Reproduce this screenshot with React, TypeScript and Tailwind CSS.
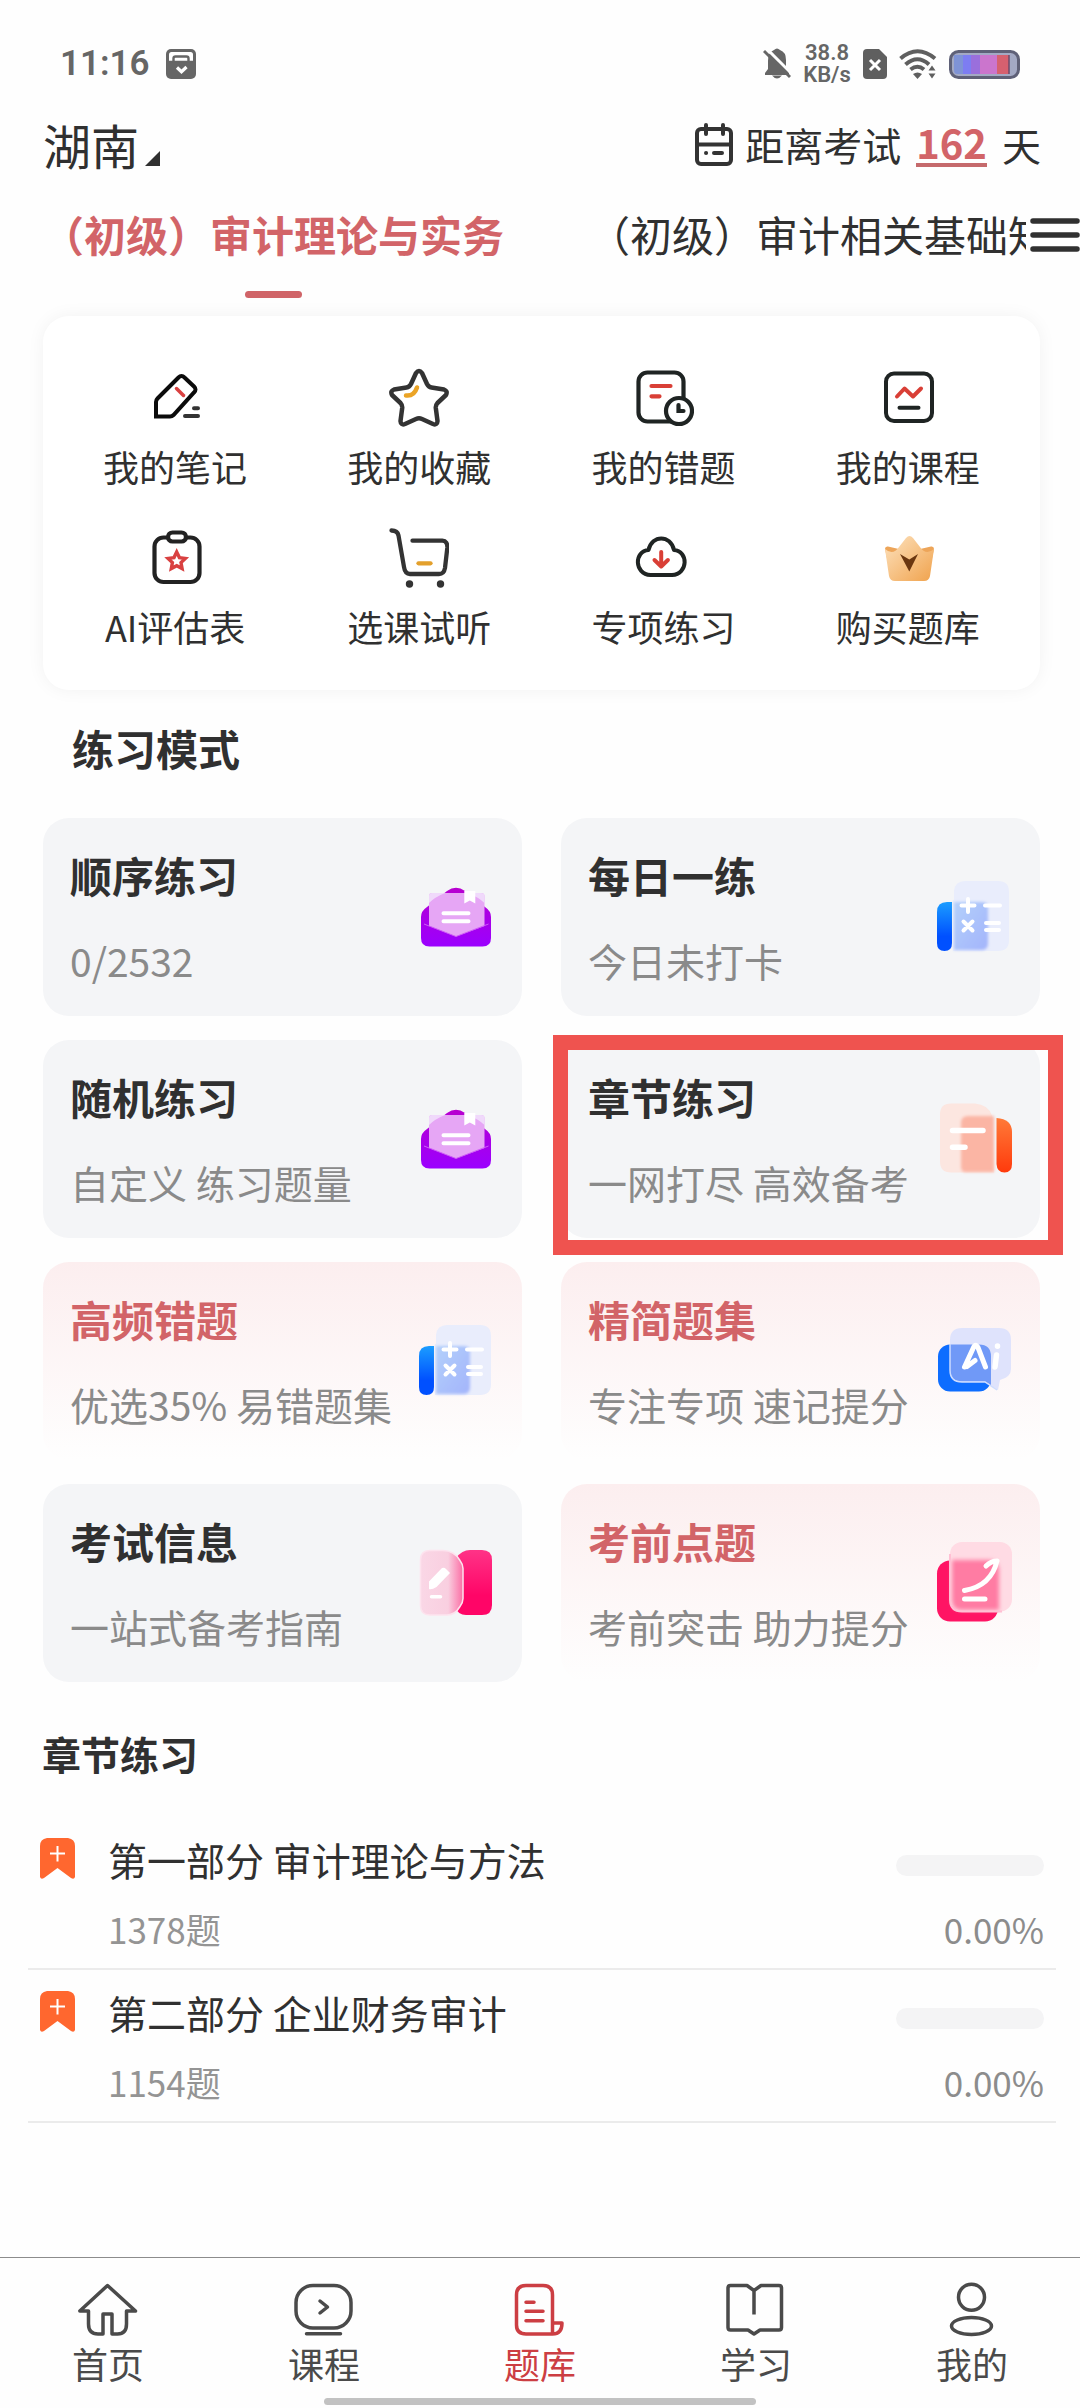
import React, { useState } from 'react';
import clsx from 'clsx';

const PlannerIcon = () => (
    <svg viewBox="0 0 30 30" className="w-[30px] h-[30px]" aria-hidden="true">
        <rect width="30" height="30" rx="5" fill="#666" />
        <path d="M3 12V5.500Q3 3 5.500 3h19Q27 3 27 5.500V12" fill="#fff" />
        <path d="M7.500 13V9.500Q7.500 7.500 9.500 7.500h11q2 0 2 2V13" fill="none" stroke="#666" strokeWidth="2.400" />
        <path d="M3 12.500h24" stroke="#666" strokeWidth="1.500" />
        <path d="M11 18.500l4.500 4.200 5-4.700" fill="none" stroke="#fff" strokeWidth="3.200" />
    </svg>
);

const BellOffIcon = () => (
    <svg viewBox="0 0 28 32" className="w-7 h-8" aria-hidden="true">
        <path d="M5 13Q5 4 11 2q3-3 6 0 6 2 6 10v8l3 5v2H2v-2l3-4z" fill="#666" />
        <path d="M9 27.500q5 6 10 0z" fill="#666" />
        <path d="M3 0l27 27" stroke="#fefefe" strokeWidth="3" />
        <path d="M1 3l26 26" stroke="#666" strokeWidth="3" />
    </svg>
);

const SimIcon = () => (
    <svg viewBox="0 0 24 30" className="w-6 h-[30px]" aria-hidden="true">
        <path d="M4 0h12l8 8v18q0 4-4 4H4q-4 0-4-4V4Q0 0 4 0z" fill="#5f5f5f" />
        <path d="M7 11l10 10M17 11L7 21" stroke="#fff" strokeWidth="3" />
    </svg>
);

const WifiIcon = () => (
    <svg viewBox="0 0 38 30" className="w-[38px] h-[30px]" fill="none" stroke="#5f5f5f" strokeWidth="4" aria-hidden="true">
        <path d="M1.500 9.500Q18.500-5 36 9.500" />
        <path d="M6.500 15.500Q18.500 5 30 15.500" />
        <path d="M11.500 20.500Q18.500 15 25 20.500" />
        <path d="M14 25q4.500-3 9 0l-4.500 5z" fill="#5f5f5f" stroke="none" />
        <path d="M29.500 21.500l3.500-5 3.500 5zM29.500 24.500l3.500 5 3.500-5z" fill="#5f5f5f" stroke="none" />
    </svg>
);

const BatteryIcon = () => (
    <svg viewBox="0 0 71 29" className="w-[71px] h-[29px]" aria-hidden="true">
        <rect x="1.500" y="1.500" width="68" height="26" rx="8" fill="#a3a9c4" stroke="#5f6178" strokeWidth="3" />
        <path d="M5 5h9v19H8q-3 0-3-4z" fill="#7f93d6" />
        <path d="M14 5h8v19h-8z" fill="#7d7df2" />
        <path d="M22 5h9v19h-9z" fill="#9a6fdc" />
        <path d="M31 5h17v19H31z" fill="#cb75cd" />
        <path d="M48 5h12v19H48z" fill="#d6606f" />
        <path d="M60 5v19" stroke="#6d4a6a" strokeWidth="1.500" />
    </svg>
);

const CalendarIcon = () => (
    <svg viewBox="0 0 38 43" className="w-[38px] h-[43px]" fill="none" stroke="#333" strokeWidth="4" strokeLinecap="round" aria-hidden="true">
        <rect x="2" y="6" width="34" height="35" rx="4" />
        <path d="M2 21.500h34M11 2v9M28 2v9M19 30h8M11 30h.1" />
    </svg>
);

const NoteIcon = () => (
    <svg viewBox="0 0 60 60" className="w-[60px] h-[60px]" fill="none" strokeWidth="4" strokeLinecap="round" aria-hidden="true">
        <path d="M11 48.500V34q0-2 1.500-3.500L33.500 9.500q3-3 6 0l9.500 9q3 3 0 6L28.500 47q-1.500 1.500-3.500 1.500z" stroke="#0b0b0b" />
        <path d="M40 48h13M49 40.300h4" stroke="#333" />
        <path d="M31.500 20.500l7 7" stroke="#d94141" strokeWidth="3.500" />
    </svg>
);

const StarIcon = () => (
    <svg viewBox="0 0 60 60" className="w-[60px] h-[60px]" fill="none" strokeWidth="4.500" strokeLinecap="round" strokeLinejoin="round" aria-hidden="true">
        <path
            d="M27 5q3-4 6 0l5 11q1.500 3 4.500 3.500l12.500 2q4 1.500 2 5.500l-8.500 8q-2 2.200-1.700 5l1.700 13q-.3 4.500-4.500 3l-11-5q-3-1.400-6 0l-11 5q-4.200 1.500-4.500-3l1.700-13q.3-2.800-1.700-5l-8.500-8q-2-4 2-5.500l12.500-2q3-.5 4.500-3.500z"
            stroke="#333"
        />
        <path d="M17 27.500q8 1 11-8" stroke="#eba426" />
    </svg>
);

const WrongIcon = () => (
    <svg viewBox="0 0 60 60" className="w-[60px] h-[60px]" fill="none" strokeWidth="4.200" strokeLinecap="round" aria-hidden="true">
        <rect x="4.500" y="4.500" width="45" height="49" rx="9" stroke="#1f2423" />
        <path d="M17.500 18h19M17.500 28.300h8" stroke="#d93f36" />
        <circle cx="45" cy="43" r="13" fill="#fff" stroke="#1f2423" />
        <path d="M44.500 37v6h5" stroke="#1f2423" />
    </svg>
);

const CourseBoxIcon = () => (
    <svg viewBox="0 0 60 60" className="w-[60px] h-[60px]" fill="none" strokeWidth="4" strokeLinecap="round" strokeLinejoin="round" aria-hidden="true">
        <rect x="8" y="5.500" width="46" height="47.500" rx="8" stroke="#1f2423" />
        <path d="M19 28.500l7.500-8 8.500 8 8-8" stroke="#d93f36" />
        <path d="M21.500 39.700h19" stroke="#1f2423" />
    </svg>
);

const ReportIcon = () => (
    <svg viewBox="0 0 60 60" className="w-[60px] h-[60px]" fill="none" strokeWidth="4.200" aria-hidden="true">
        <rect x="9.500" y="9.500" width="45" height="44.500" rx="9" stroke="#222" />
        <rect x="23" y="4.500" width="18" height="9" rx="4.500" fill="#fff" stroke="#222" />
        <path d="M31.700 24l2.700 5.600 6 .8-4.400 4.200 1.100 6-5.400-2.900-5.400 2.900 1.100-6-4.400-4.200 6-.8z" stroke="#d94141" strokeWidth="3.400" />
    </svg>
);

const CartIcon = () => (
    <svg viewBox="0 0 60 60" className="w-[60px] h-[60px]" fill="none" strokeWidth="4.300" strokeLinecap="round" strokeLinejoin="round" aria-hidden="true">
        <path d="M2.500 2.500q6 0 7 5L15 39q1 7 6 7h29q5 0 6-6l2.300-20q.5-7-5-7.300H23.500" stroke="#333" />
        <circle cx="20.500" cy="56" r="3.700" fill="#333" />
        <circle cx="51.500" cy="56" r="3.700" fill="#333" />
        <path d="M29.500 35.300h12" stroke="#e3a02c" />
    </svg>
);

const CloudIcon = () => (
    <svg viewBox="0 0 60 60" className="w-[60px] h-[60px]" fill="none" strokeWidth="4" strokeLinecap="round" strokeLinejoin="round" aria-hidden="true">
        <path d="M16.500 47C0 46 0 23 14.500 22 18 6.500 36.500 6.500 40 22 54.500 23 54.500 46 38 47z" stroke="#1f2423" />
        <path d="M27.200 24v14M20.500 32l6.700 6.500 6.700-6.500" stroke="#d93f36" />
    </svg>
);

const CrownIcon = () => (
    <svg viewBox="0 0 60 60" className="w-[60px] h-[60px]" aria-hidden="true">
        <defs>
            <linearGradient id="crown" x1="0" y1="0" x2="1" y2="1">
                <stop offset="0" stopColor="#fde3c0" />
                <stop offset="1" stopColor="#f0a24c" />
            </linearGradient>
        </defs>
        <path d="M7 21q0-3 3-2.500l13 3h17l13-3q3-.5 3 2.500l-3 14H10z" fill="#eda559" />
        <path d="M7 21q8 7 14-2l7-9q3.500-4 7 0l7 9q6 9 14 2l-4 27q-1 5-6 5H17q-5 0-6-5z" fill="url(#crown)" />
        <path d="M22 26l9.300 5.500L40 26l-8.700 17.500z" fill="#6b3710" />
    </svg>
);

const EnvelopeIcon = () => (
    <svg viewBox="0 0 80 80" className="w-20 h-20 shrink-0" aria-hidden="true">
        <defs>
            <linearGradient id="envelope" x1="0" y1="0" x2="0" y2="1">
                <stop offset="0" stopColor="#b800cf" />
                <stop offset="1" stopColor="#9b00ff" />
            </linearGradient>
        </defs>
        <path d="M12 31L32 15q9-6.500 18 0l20 16q6 4 6 10v21q0 8.500-8.500 8.500h-53Q6 70.500 6 62V41q0-6 6-10z" fill="url(#envelope)" />
        <path d="M14 20q0-3 3-3h49q3.500 0 3.500 3v30L41 60.500 14 50z" fill="#e6a6f5" />
        <path d="M14 20q0-3 3-3h13Q20 21 14 27zM69.500 20q0-3-3.500-3H53q10 4 16.500 10z" fill="#f0d9fb" />
        <path d="M9 48l32 12.500L73.500 48" fill="none" stroke="#cf5cf7" />
        <path d="M49.300 15h11v12.500l-5.500-3-5.500 3z" fill="#fff" />
        <path d="M28.500 37.300h25M28.500 45.300h25" stroke="#fff" strokeWidth="4" strokeLinecap="round" />
    </svg>
);

const MathIcon = () => (
    <svg viewBox="0 0 80 80" className="w-20 h-20 shrink-0" aria-hidden="true">
        <defs>
            <linearGradient id="mathSpine" x1="0" y1="0" x2="0" y2="1">
                <stop offset="0" stopColor="#1b9dff" />
                <stop offset=".7" stopColor="#0050ff" />
            </linearGradient>
            <linearGradient id="mathPage" x1="0" y1="0" x2="1" y2="1">
                <stop offset="0" stopColor="#b3d0fb" />
                <stop offset="1" stopColor="#a3b4fb" />
            </linearGradient>
            <filter id="mathSoft">
                <feGaussianBlur stdDeviation="1.500" />
            </filter>
        </defs>
        <path d="M19 26v41q0 8-7.500 8T4 67V36q0-10 10-10z" fill="url(#mathSpine)" />
        <path d="M20 24h1V15Q22 5 32 5h33q11 0 11 11v48q0 11-11 11H20z" fill="#e9edfc" />
        <path d="M21 26h28q6 0 6 6v35q0 7-6 7H21z" fill="url(#mathPage)" filter="url(#mathSoft)" />
        <path d="M28.500 29.500h13M35 23v13M52 29.500h15M30.500 45.500l9 9M39.500 45.500l-9 9M53 47h13M53 54h13" stroke="#fff" strokeWidth="4" strokeLinecap="round" />
    </svg>
);

const ChapterIcon = () => (
    <svg viewBox="0 0 80 80" className="w-20 h-20 shrink-0" aria-hidden="true">
        <defs>
            <linearGradient id="chapter" x1="0" y1="0" x2="0" y2="1">
                <stop offset="0" stopColor="#ff7a38" />
                <stop offset="1" stopColor="#ff3a0c" />
            </linearGradient>
            <filter id="chapterSoft">
                <feGaussianBlur stdDeviation="1.500" />
            </filter>
        </defs>
        <path d="M18 5.500h24q13 1 17 12l2 57H18q-11 0-11-11v-47q0-11 11-11z" fill="#fce6e0" />
        <path d="M35 18h26v56H33q-5 0-5-5V25q0-7 7-7z" fill="#fbb5a4" filter="url(#chapterSoft)" />
        <path d="M63.500 20q15.500 1 15.500 14v32q0 8.500-7.500 8.500t-8-8.500z" fill="url(#chapter)" />
        <path d="M19.500 32.500H50M19.500 49.300H32" stroke="#fff" strokeWidth="5.500" strokeLinecap="round" />
    </svg>
);

const AiIcon = () => (
    <svg viewBox="0 0 80 80" className="w-20 h-20 shrink-0" aria-hidden="true">
        <rect x="5" y="24.500" width="53" height="47" rx="12" fill="#0d6dff" />
        <path d="M29 8h37q12 0 12 12v29q0 8-11 11l-2 10-13-8H29q-12 0-12-12V20Q17 8 29 8z" fill="#dfe3fc" />
        <path d="M17 24.500h29q12 0 12 12V65l-6-3.500H29q-12 0-12-12z" fill="#7099f7" />
        <path d="M17 24v26q0 12 12 12h23l12 8" fill="none" stroke="#cddcff" strokeWidth="1.500" />
        <path d="M31.500 47l9-19.500q2-4.500 4.500 0l7.500 19.500M34 46.500l8-6" fill="none" stroke="#fff" strokeWidth="5" strokeLinecap="round" strokeLinejoin="round" />
        <path d="M63.500 35l-1.500 12M64.500 26v.3" stroke="#fff" strokeWidth="5.500" strokeLinecap="round" />
    </svg>
);

const BookPenIcon = () => (
    <svg viewBox="0 0 80 80" className="w-20 h-20 shrink-0" aria-hidden="true">
        <defs>
            <linearGradient id="bookRight" x1="0" y1="0" x2="0" y2="1">
                <stop offset="0" stopColor="#ff3387" />
                <stop offset=".7" stopColor="#ff0567" />
            </linearGradient>
            <linearGradient id="bookLeft" x1="0" y1="0" x2="1" y2="0">
                <stop offset="0" stopColor="#fad7e6" />
                <stop offset=".65" stopColor="#f9cfe0" />
                <stop offset="1" stopColor="#fb6ea5" />
            </linearGradient>
        </defs>
        <path d="M41 16q6-8 14-8h12q10 0 10 10v45q0 10-10 10H51q-8 0-10-7z" fill="url(#bookRight)" />
        <path d="M15 8.500h13q11 0 17 10 3 4 3 8v30q0 4-3 8-5 8.500-13 8.500H15q-9.500 0-9.500-9.500V18q0-9.500 9.500-9.500z" fill="url(#bookLeft)" stroke="#fde3ee" strokeWidth="1.500" />
        <path d="M14 39.500l13-13.500q2.500-1 4 1l4 4-13.500 14q-5 3-7.500 2z" fill="#fff" />
        <path d="M16.500 54.700h9" stroke="#fff" strokeWidth="3.500" strokeLinecap="round" />
    </svg>
);

const PredictIcon = () => (
    <svg viewBox="0 0 80 80" className="w-20 h-20 shrink-0" aria-hidden="true">
        <defs>
            <filter id="predictSoft">
                <feGaussianBlur stdDeviation="2" />
            </filter>
        </defs>
        <rect x="4" y="18.500" width="61" height="61" rx="13" fill="#ff1464" />
        <rect x="17" y="0" width="62" height="69.500" rx="12" fill="#ffdbe4" />
        <path d="M19 18h36q11 0 11 11v39H29q-10 0-10-10z" fill="#ff7ba3" filter="url(#predictSoft)" />
        <path d="M17 12v45.500q0 12 12 12h40" fill="none" stroke="#ffc0d4" strokeWidth="2" />
        <path d="M31.500 48.500Q58 44 64 19q-6 0-11 5M31.500 57H52" fill="none" stroke="#fff" strokeWidth="5" strokeLinecap="round" strokeLinejoin="round" />
    </svg>
);

const BookmarkIcon = () => (
    <svg viewBox="0 0 35 41" className="w-[35px] h-[41px] mt-1 shrink-0" aria-hidden="true">
        <path d="M7 0h21q7 1 7 8v31q-1 3-4 1L17.500 30 4 40q-3 2-4-1V8q0-7 7-8z" fill="#ff672f" />
        <path d="M10 15.500h15M17.500 8v15.500" stroke="#fff" strokeWidth="2" />
    </svg>
);

const HomeIcon = () => (
    <svg viewBox="0 0 60 60" className="w-[60px] h-[60px]" fill="none" stroke="currentColor" strokeWidth="3.500" strokeLinejoin="round" aria-hidden="true">
        <path d="M29.500 5.500L57.500 31H48.500v13q0 10-9 10H34V34h-9v20h-5q-9.500 0-9.500-10V31H1.800z" />
    </svg>
);

const LessonIcon = () => (
    <svg viewBox="0 0 60 60" className="w-[60px] h-[60px]" fill="none" stroke="currentColor" strokeWidth="3.500" strokeLinecap="round" strokeLinejoin="round" aria-hidden="true">
        <rect x="2" y="5.500" width="55" height="42.500" rx="17" />
        <path d="M12.500 53.700h34M26 21l7.500 6L26 33" />
    </svg>
);

const BankIcon = () => (
    <svg viewBox="0 0 60 60" className="w-[60px] h-[60px]" fill="none" stroke="currentColor" strokeWidth="3.500" strokeLinecap="round" strokeLinejoin="round" aria-hidden="true">
        <path d="M43 54H16Q6.500 54 6.500 45V15q0-9.500 9.500-9.500h17q9.500 0 9.500 9.500v39q9.500 0 9.500-11h-8" />
        <path d="M16 22.300h8M16 31.300h17M16 40.700h17" />
    </svg>
);

const StudyIcon = () => (
    <svg viewBox="0 0 60 60" className="w-[60px] h-[60px]" fill="none" stroke="currentColor" strokeWidth="3.500" strokeLinejoin="round" aria-hidden="true">
        <path d="M4.500 5.500H21l7 5 7-5h18q2.500 0 2.500 2.500v39.500q0 2.500-2.500 2.500H34l-6 4-6-4H4.500Q2 50 2 47.500V8q0-2.500 2.500-2.500zM28 10v24.500" />
    </svg>
);

const MeIcon = () => (
    <svg viewBox="0 0 60 60" className="w-[60px] h-[60px]" fill="none" stroke="currentColor" strokeWidth="3.500" aria-hidden="true">
        <circle cx="29.500" cy="17.300" r="13" />
        <ellipse cx="29.500" cy="46" rx="20" ry="8.500" />
    </svg>
);

interface PracticeMode {
    title: string;
    desc: string;
    icon: React.ReactNode;
    hot?: boolean;
    marked?: boolean;
}

const subjects = ['（初级）审计理论与实务', '（初级）审计相关基础知识'];

const tools = [
    { label: '我的笔记', icon: <NoteIcon /> },
    { label: '我的收藏', icon: <StarIcon /> },
    { label: '我的错题', icon: <WrongIcon /> },
    { label: '我的课程', icon: <CourseBoxIcon /> },
    { label: 'AI评估表', icon: <ReportIcon /> },
    { label: '选课试听', icon: <CartIcon /> },
    { label: '专项练习', icon: <CloudIcon /> },
    { label: '购买题库', icon: <CrownIcon /> },
];

const modes: PracticeMode[] = [
    { title: '顺序练习', desc: '0/2532', icon: <EnvelopeIcon /> },
    { title: '每日一练', desc: '今日未打卡', icon: <MathIcon /> },
    { title: '随机练习', desc: '自定义 练习题量', icon: <EnvelopeIcon /> },
    { title: '章节练习', desc: '一网打尽 高效备考', icon: <ChapterIcon />, marked: true },
    { title: '高频错题', desc: '优选35% 易错题集', icon: <MathIcon />, hot: true },
    { title: '精简题集', desc: '专注专项 速记提分', icon: <AiIcon />, hot: true },
    { title: '考试信息', desc: '一站式备考指南', icon: <BookPenIcon /> },
    { title: '考前点题', desc: '考前突击 助力提分', icon: <PredictIcon />, hot: true },
];

const chapters = [
    { title: '第一部分 审计理论与方法', count: 1378, progress: 0 },
    { title: '第二部分 企业财务审计', count: 1154, progress: 0 },
];

const navItems = [
    { label: '首页', icon: <HomeIcon /> },
    { label: '课程', icon: <LessonIcon /> },
    { label: '题库', icon: <BankIcon /> },
    { label: '学习', icon: <StudyIcon /> },
    { label: '我的', icon: <MeIcon /> },
];

const StatusBar = () => (
    <div className="flex items-center justify-between pt-6 h-[104px] px-[60px] text-[#666]">
        <div className="flex items-center gap-4">
            <span className="font-['Roboto'] font-semibold text-[35px] leading-10">11:16</span>
            <PlannerIcon />
        </div>
        <div className="flex items-center gap-3">
            <BellOffIcon />
            <div className="w-12 text-center font-['Roboto'] text-[22px] leading-[22px] font-semibold">
                <div>38.8</div>
                <div>KB/s</div>
            </div>
            <SimIcon />
            <WifiIcon />
            <BatteryIcon />
        </div>
    </div>
);

const ModeCard: React.FC<{ mode: PracticeMode }> = ({ mode }) => (
    <div className="relative">
        <button
            className={clsx(
                'w-full flex items-center justify-between px-[27px] pt-7 pb-[31px] rounded-[26px] text-left',
                mode.hot ? 'bg-linear-to-b from-[#fceeef] to-[#fefefe]' : 'bg-[#f4f5f7]'
            )}
        >
            <span className="block whitespace-nowrap">
                <span className={clsx('block text-[42px] leading-[58px] font-bold', mode.hot ? 'text-[#d26468]' : 'text-[#303030]')}>{mode.title}</span>
                <span className="block mt-[31px] text-[39px] leading-[50px] text-[#8a8a8a]">{mode.desc}</span>
            </span>
            {mode.icon}
        </button>
        {mode.marked && <div className="absolute -top-[5px] -bottom-[17px] -left-2 -right-[23px] border-[15px] border-[#ef534f] pointer-events-none" />}
    </div>
);

const App: React.FC = () => {
    const [subject, setSubject] = useState(0);
    const [activeNav, setActiveNav] = useState('题库');

    return (
        <div className="min-h-screen flex flex-col bg-[#fefefe] text-[#303030] font-['Noto_Sans_CJK_SC','Noto_Sans',sans-serif] overflow-x-hidden">
            <StatusBar />

            <header className="flex items-center justify-between h-20 mb-[6px] pl-[43px] pr-[39px]">
                <div className="flex items-end gap-2">
                    <select aria-label="地区" className="appearance-none bg-transparent text-[48px] leading-[60px] h-[60px] w-[94px]" defaultValue="湖南">
                        <option>湖南</option>
                    </select>
                    <svg viewBox="0 0 15 15" className="w-[15px] h-[15px] mb-2" aria-hidden="true">
                        <path d="M15 0v15H0z" fill="#303030" />
                    </svg>
                </div>
                <div className="flex items-center text-[39px] leading-[50px]">
                    <CalendarIcon />
                    <span className="ml-3">距离考试</span>
                    <span className="mx-[15px] text-[40px] font-bold text-[#d26468] border-b-4 border-[#c56a6c] leading-[42px]">162</span>
                    <span>天</span>
                </div>
            </header>

            <div className="flex items-start">
                <div role="tablist" className="flex flex-1 min-w-0 overflow-hidden">
                    {subjects.map((name, i) => (
                        <button key={name} role="tab" aria-selected={subject === i} onClick={() => setSubject(i)} className="shrink-0 px-[42px] flex flex-col items-center">
                            <span className={clsx('text-[42px] leading-[88px] whitespace-nowrap', subject === i && 'font-bold text-[#d26468]')}>{name}</span>
                            {subject === i && <span className="mt-[13px] w-[57px] h-[7px] rounded-full bg-[#d06468]" />}
                        </button>
                    ))}
                </div>
                <button aria-label="全部科目" className="shrink-0 h-[90px] pl-1 flex items-center">
                    <svg viewBox="0 0 50 36" className="w-[50px] h-9" stroke="#303030" strokeWidth="5.500" strokeLinecap="round" aria-hidden="true">
                        <path d="M3 4h44M3 18h44M3 32h44" />
                    </svg>
                </button>
            </div>

            <section className="mt-[18px] ml-[43px] mr-10 px-[10px] pt-[52px] pb-[42px] grid grid-cols-4 gap-y-10 rounded-[26px] bg-white shadow-[0_0_18px_rgba(0,0,0,0.05)]">
                {tools.map((tool) => (
                    <button key={tool.label} className="flex flex-col items-center">
                        {tool.icon}
                        <span className="mt-[18px] mb-[2px] text-[36px] leading-10">{tool.label}</span>
                    </button>
                ))}
            </section>

            <h2 className="mt-[28px] pl-[72px] text-[42px] leading-[60px] font-bold">练习模式</h2>
            <section className="mt-[40px] ml-[43px] mr-10 grid grid-cols-2 gap-x-[39px] gap-y-6">
                {modes.map((mode) => (
                    <ModeCard key={mode.title} mode={mode} />
                ))}
            </section>

            <h2 className="mt-[46px] pl-[42px] text-[39px] leading-[50px] font-bold">章节练习</h2>
            <ul className="mt-[39px] ml-7 mr-6">
                {chapters.map((chapter) => (
                    <li key={chapter.title} className="flex items-start px-3 pt-[17px] pb-[17px] border-b-2 border-[#ebebeb]">
                        <BookmarkIcon />
                        <div className="flex-1 ml-[33px]">
                            <h3 className="text-[39px] leading-[50px]">{chapter.title}</h3>
                            <p className="mt-[23px] text-[35px] leading-[44px] text-[#949494]">{chapter.count}题</p>
                        </div>
                        <div className="flex flex-col items-end">
                            <div className="mt-[21px] w-[148px] h-[21px] rounded-full bg-[#f4f4f5] overflow-hidden">
                                <div className="h-full bg-[#ff672f]" style={{ width: `${chapter.progress}%` }} />
                            </div>
                            <span className="mt-[31px] text-[35px] leading-[44px] text-[#8c8c8c]">{chapter.progress.toFixed(2)}%</span>
                        </div>
                    </li>
                ))}
            </ul>

            <nav className="mt-auto border-t border-[#8c8c8c]">
                <div className="grid grid-cols-5 pt-[22px]">
                    {navItems.map((item) => (
                        <button
                            key={item.label}
                            onClick={() => setActiveNav(item.label)}
                            className={clsx('flex flex-col items-center', activeNav === item.label ? 'text-[#cc3e43]' : 'text-[#4a4a4a]')}
                        >
                            {item.icon}
                            <span className="mt-[2px] text-[36px] leading-[42px]">{item.label}</span>
                        </button>
                    ))}
                </div>
                <div className="mt-[14px] mb-[3px] mx-auto w-2/5 h-[7px] rounded-full bg-[#c2c2c2]" />
            </nav>
        </div>
    );
};

export default App;
